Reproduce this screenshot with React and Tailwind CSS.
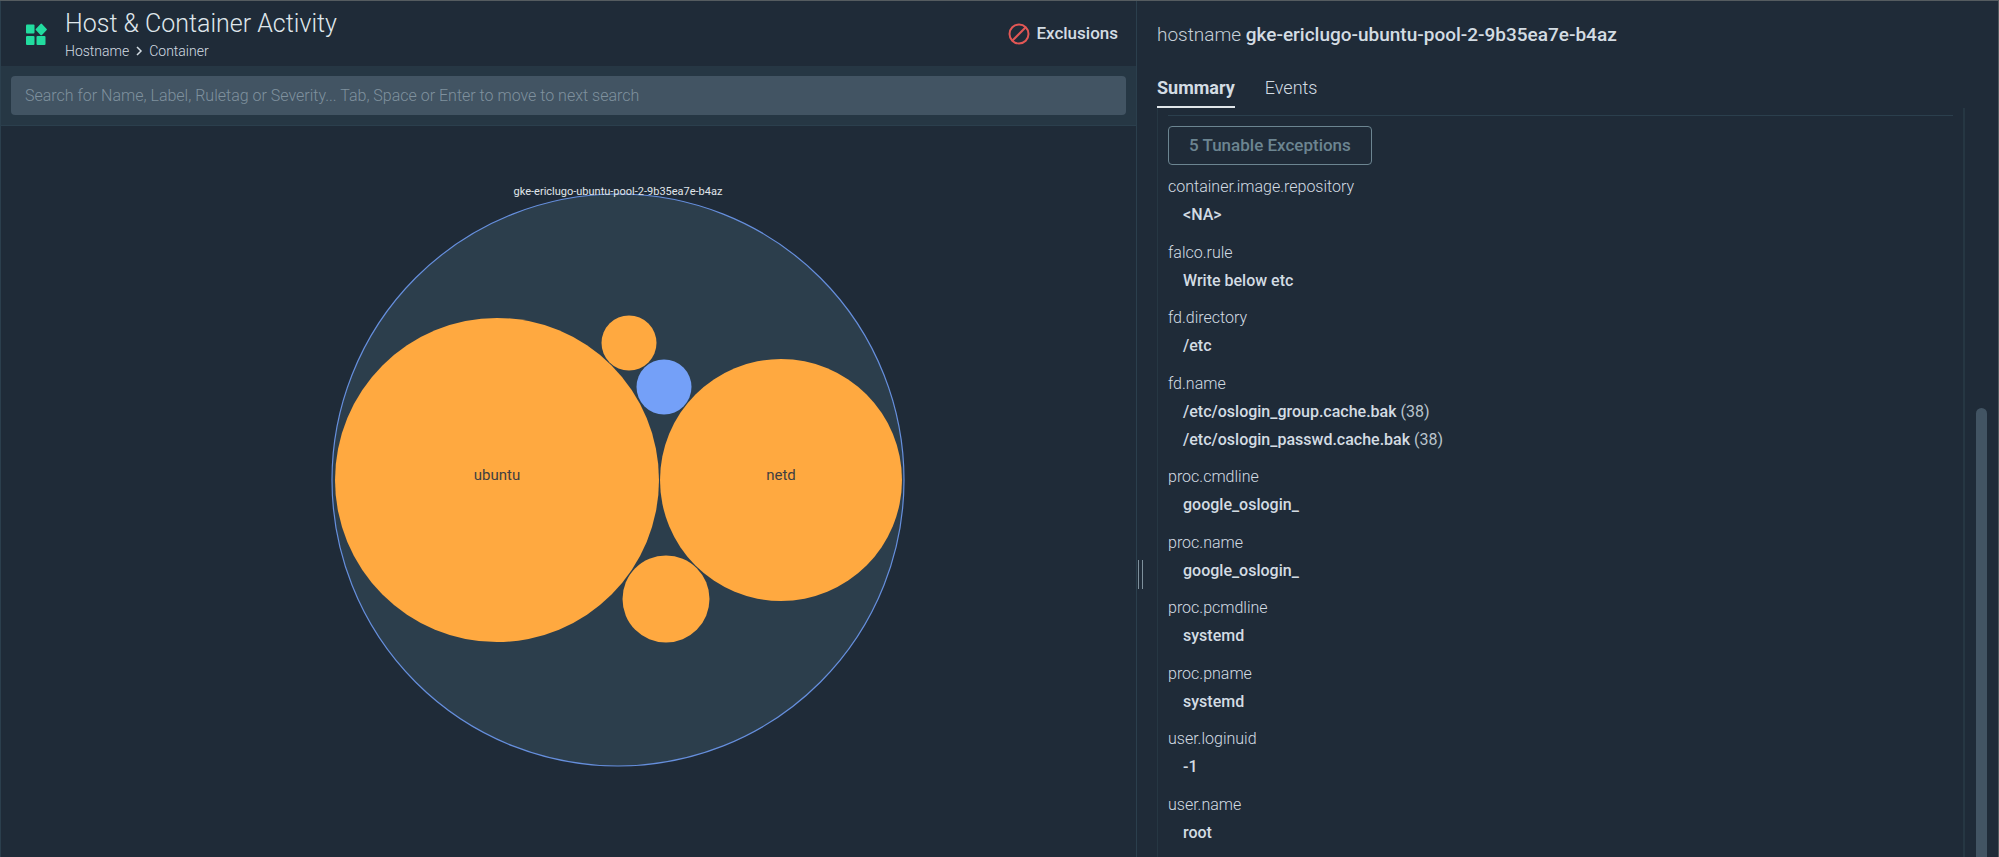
import { Fragment } from "react";

const fields = [
  { label: "container.image.repository", values: [{ text: "<NA>" }] },
  { label: "falco.rule", values: [{ text: "Write below etc" }] },
  { label: "fd.directory", values: [{ text: "/etc" }] },
  {
    label: "fd.name",
    values: [
      { text: "/etc/oslogin_group.cache.bak", count: 38 },
      { text: "/etc/oslogin_passwd.cache.bak", count: 38 },
    ],
  },
  { label: "proc.cmdline", values: [{ text: "google_oslogin_" }] },
  { label: "proc.name", values: [{ text: "google_oslogin_" }] },
  { label: "proc.pcmdline", values: [{ text: "systemd" }] },
  { label: "proc.pname", values: [{ text: "systemd" }] },
  { label: "user.loginuid", values: [{ text: "-1" }] },
  { label: "user.name", values: [{ text: "root" }] },
];

const containers = [
  { id: "ubuntu", cx: 496, cy: 354, r: 162, color: "#ffa940", label: "ubuntu" },
  { id: "netd", cx: 780, cy: 354, r: 121, color: "#ffa940", label: "netd" },
  { id: "c3", cx: 628, cy: 217, r: 27.5, color: "#ffa940" },
  { id: "c4", cx: 663, cy: 261, r: 27.5, color: "#74a0f8" },
  { id: "c5", cx: 665, cy: 473, r: 43.5, color: "#ffa940" },
];

function Header() {
  return (
    <header className="flex h-[65px] items-center justify-between pr-[18px] pl-6">
      <div className="flex items-center gap-4">
        <svg className="size-6 text-[#22dc9f]" viewBox="0 0 24 24" fill="currentColor">
          <rect x="1" y="2.5" width="8.5" height="9" rx="1" />
          <rect x="1" y="14" width="8.5" height="9" rx="1" />
          <rect x="11.5" y="14" width="9" height="9" rx="1" />
          <path d="M16.2 1.500 Q16.700 1.500 17 2 L21.700 7 Q22.200 7.500 21.700 8 L17 13 Q16.200 13.500 15.500 13 L10.800 8 Q10.400 7.500 10.800 7 L15.500 2 Z" />
        </svg>
        <div className="pt-[2px]">
          <h1 className="text-[25px] leading-8 font-light text-[#dfe6eb]">Host &amp; Container Activity</h1>
          <nav className="flex items-center gap-[6px] text-sm leading-[22px] font-light text-[#d3dce3]">
            <a href="#hostname">Hostname</a>
            <svg className="h-3 w-2" viewBox="0 0 8 12" fill="none" stroke="currentColor" strokeWidth="1.5">
              <path d="M2 2 L6 6 L2 10" />
            </svg>
            <a href="#container">Container</a>
          </nav>
        </div>
      </div>

      <button type="button" className="flex items-center gap-[6px] text-[17px] font-medium text-[#d3dce3]">
        <svg className="size-[22px] text-[#e25755]" viewBox="0 0 22 22" fill="none" stroke="currentColor" strokeWidth="2">
          <circle cx="11" cy="11" r="9.5" />
          <path d="M17.5 4.5 L4.5 17.5" />
        </svg>
        Exclusions
      </button>
    </header>
  );
}

function BubbleChart() {
  return (
    <svg className="w-full flex-1" viewBox="0 0 1135 731" role="img" aria-label="Containers by host">
      <circle cx="617" cy="354" r="286" fill="#2c3e4c" stroke="#668fdd" strokeWidth="1.2" />
      {containers.map((c) => (
        <Fragment key={c.id}>
          <circle cx={c.cx} cy={c.cy} r={c.r} fill={c.color} />
          {c.label && (
            <text x={c.cx} y="354" textAnchor="middle" className="fill-[#3f4041] text-[15px]">
              {c.label}
            </text>
          )}
        </Fragment>
      ))}
      <text x="617" y="69" textAnchor="middle" className="fill-[#e0e6ea] text-[11px]">
        gke-ericlugo-ubuntu-pool-2-9b35ea7e-b4az
      </text>
    </svg>
  );
}

function Details() {
  return (
    <aside className="flex min-w-0 flex-col border-l border-[#2b3f4d]">
      <h2 className="pt-5 pl-5 text-[19px] leading-7 font-light text-[#c6d0d8]">
        hostname <span className="font-medium text-[#d3dce3]">gke-ericlugo-ubuntu-pool-2-9b35ea7e-b4az</span>
      </h2>

      <div className="flex gap-[30px] pt-[26px] pl-5 text-lg leading-[26px]" role="tablist">
        <button type="button" role="tab" aria-selected="true" className="border-b-2 border-[#e0e6ea] pb-[5px] font-bold text-[#d3dce3]">
          Summary
        </button>
        <button type="button" role="tab" aria-selected="false" className="border-b-2 border-transparent pb-[5px] font-light text-[#d3dce3]">
          Events
        </button>
      </div>

      <div className="flex flex-1">
        {/* Drag handle of the split pane */}
        <div className="mt-[452px] mr-[14px] ml-px h-[29px] w-[5px] border-x border-[#7e909c]" />

        <section className="flex flex-1 flex-col border-r-2 border-l border-[#263743] px-[10px] pt-[7px] pb-[10px]">
          <hr className="border-[#2b3f4d]" />
          <button
            type="button"
            className="mt-[10px] self-start rounded border border-[#6c8591] px-5 py-[6px] text-[17px] leading-[25px] font-medium text-[#6c8591]"
          >
            5 Tunable Exceptions
          </button>
          <dl className="mt-[8px] flex flex-1 flex-col justify-between text-base leading-7">
            {fields.map((field) => (
              <div key={field.label}>
                <dt className="font-light text-[#d3dce3]">{field.label}</dt>
                {field.values.map((value) => (
                  <dd key={value.text} className="pl-[15px] text-[#b9c4cc]">
                    <span className="font-medium text-[#d3dce3]">{value.text}</span>
                    {value.count && ` (${value.count})`}
                  </dd>
                ))}
              </div>
            ))}
          </dl>
        </section>

        {/* Scrollbar thumb */}
        <div className="mt-[300px] mr-[11px] ml-[11px] w-[11px] rounded-t-full bg-[#425463]" />
      </div>
    </aside>
  );
}

export default function App() {
  return (
    <div className="grid min-h-screen grid-cols-[1136fr_862fr] border-t border-r border-[#555c60] bg-[#1f2b38] font-[Roboto,sans-serif]">
      <main className="flex min-w-0 flex-col border-l border-[#2b3f4d]">
        <Header />
        <div className="border-b border-[#2b3f4d] bg-[#263744] p-[10px]">
          <input
            type="text"
            aria-label="Search"
            placeholder="Search for Name, Label, Ruletag or Severity... Tab, Space or Enter to move to next search"
            className="block h-[39px] w-full rounded bg-[#425463] px-[14px] text-base font-light text-[#d3dce3] placeholder:text-[#7f919e]"
          />
        </div>
        <BubbleChart />
      </main>
      <Details />
    </div>
  );
}
